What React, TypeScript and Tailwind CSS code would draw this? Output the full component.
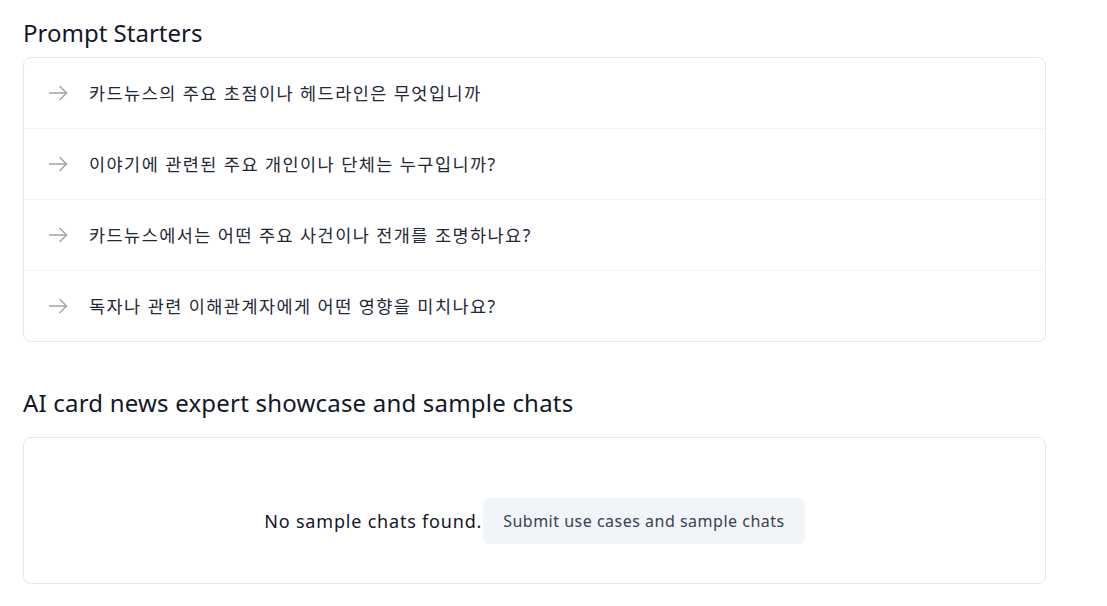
import React from "react";

const starters = [
  "카드뉴스의 주요 초점이나 헤드라인은 무엇입니까",
  "이야기에 관련된 주요 개인이나 단체는 누구입니까?",
  "카드뉴스에서는 어떤 주요 사건이나 전개를 조명하나요?",
  "독자나 관련 이해관계자에게 어떤 영향을 미치나요?",
];

function Arrow() {
  return (
    <svg width="20" height="20" viewBox="0 0 20 20" fill="none" stroke="#9ca3af" strokeWidth="1.4" strokeLinecap="round" strokeLinejoin="round">
      <path d="M1.5 10h17" />
      <path d="M12 3.5l6.5 6.5-6.5 6.5" />
    </svg>
  );
}

export default function App() {
  return (
    <div
      className="min-h-[606px] bg-white text-[#1f2937]"
      style={{ fontFamily: '"Noto Sans", "Noto Sans CJK KR", sans-serif' }}
    >
      <div className="w-[1046px] pl-[23px] pt-[17px]">
        <h2 className="text-2xl leading-8 font-normal text-[#111827]">Prompt Starters</h2>
        <div className="mt-2 rounded-lg border border-[#e5e7eb]">
          {starters.map((s, i) => (
            <div
              key={i}
              className={`flex items-center gap-[21px] pl-[24px] ${i < starters.length - 1 ? "h-[71px] border-b border-[#f3f4f6]" : "h-[70px]"}`}
            >
              <Arrow />
              <span className="text-[17.5px] tracking-[1.45px] text-[#1f2937]">{s}</span>
            </div>
          ))}
        </div>
        <h2 className="mt-[45px] text-2xl leading-8 font-normal tracking-[0.2px] text-[#111827]">
          AI card news expert showcase and sample chats
        </h2>
        <div className="mt-[18px] flex h-[147px] items-start justify-center rounded-lg border border-[#e5e7eb] pt-[60px]">
          <div className="flex items-center">
            <span className="text-[18px] tracking-[0.8px] text-[#111827]">No sample chats found.</span>
            <button className="ml-px h-[46px] rounded-md bg-[#f1f5f9] px-5 text-base tracking-[0.5px] text-[#374151]">
              Submit use cases and sample chats
            </button>
          </div>
        </div>
      </div>
    </div>
  );
}
